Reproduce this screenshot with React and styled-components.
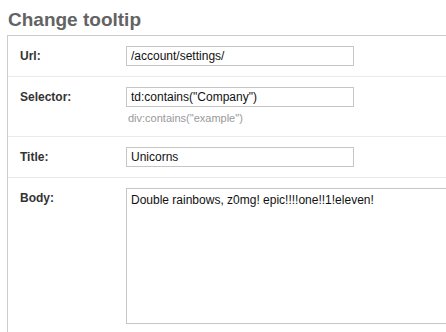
import React from 'react'
import styled, { createGlobalStyle } from 'styled-components'

const GlobalStyle = createGlobalStyle`
  html, body {
    margin: 0;
    padding: 0;
    background: #fff;
    overflow: hidden;
  }
  body {
    font-family: "Liberation Sans", Arial, sans-serif;
  }
`

const Page = styled.div`
  padding: 9px 0 0 7px;
  width: 480px;
`

const Heading = styled.h2`
  margin: 0 0 4px 1px;
  font-family: "Liberation Sans", Arial, sans-serif;
  font-size: 19px;
  line-height: 22px;
  font-weight: bold;
  color: #636363;
`

const Box = styled.div`
  border-top: 1px solid #ccc;
  border-left: 1px solid #ccc;
  height: 320px;
`

const Row = styled.div`
  display: grid;
  grid-template-columns: 118px 1fr;
  padding: ${p => p.$pad || '10px 0 10px 0'};
  border-bottom: 1px solid #eaeaea;
  &:last-child {
    border-bottom: none;
  }
`

const Label = styled.label`
  padding: 3px 0 0 12px;
  font-size: 12px;
  font-weight: bold;
  color: #333;
`

const Field = styled.div`
  display: flex;
  flex-direction: column;
`

const Input = styled.input`
  box-sizing: border-box;
  width: 228px;
  height: 20px;
  margin: 0;
  padding: 0 4px;
  border: 1px solid #c6c6c6;
  font-family: "Liberation Sans", Arial, sans-serif;
  font-size: 12px;
  color: #111;
  outline: none;
`

const Hint = styled.div`
  margin: 5px 0 0 2px;
  font-size: 11px;
  color: #999;
`

const TextArea = styled.textarea`
  box-sizing: border-box;
  width: 340px;
  height: 136px;
  margin: 0;
  padding: 4px;
  border: 1px solid #c6c6c6;
  font-family: "Liberation Sans", Arial, sans-serif;
  font-size: 12px;
  color: #111;
  resize: none;
  outline: none;
`

export default function App() {
  return (
    <Page>
      <GlobalStyle />
      <Heading>Change tooltip</Heading>
      <Box>
        <Row>
          <Label>Url:</Label>
          <Field>
            <Input defaultValue="/account/settings/" />
          </Field>
        </Row>
        <Row $pad="10px 0 12px 0">
          <Label>Selector:</Label>
          <Field>
            <Input defaultValue={'td:contains("Company")'} />
            <Hint>div:contains("example")</Hint>
          </Field>
        </Row>
        <Row>
          <Label>Title:</Label>
          <Field>
            <Input defaultValue="Unicorns" />
          </Field>
        </Row>
        <Row>
          <Label>Body:</Label>
          <Field>
            <TextArea defaultValue="Double rainbows, z0mg! epic!!!!one!!1!eleven!" />
          </Field>
        </Row>
      </Box>
    </Page>
  )
}
